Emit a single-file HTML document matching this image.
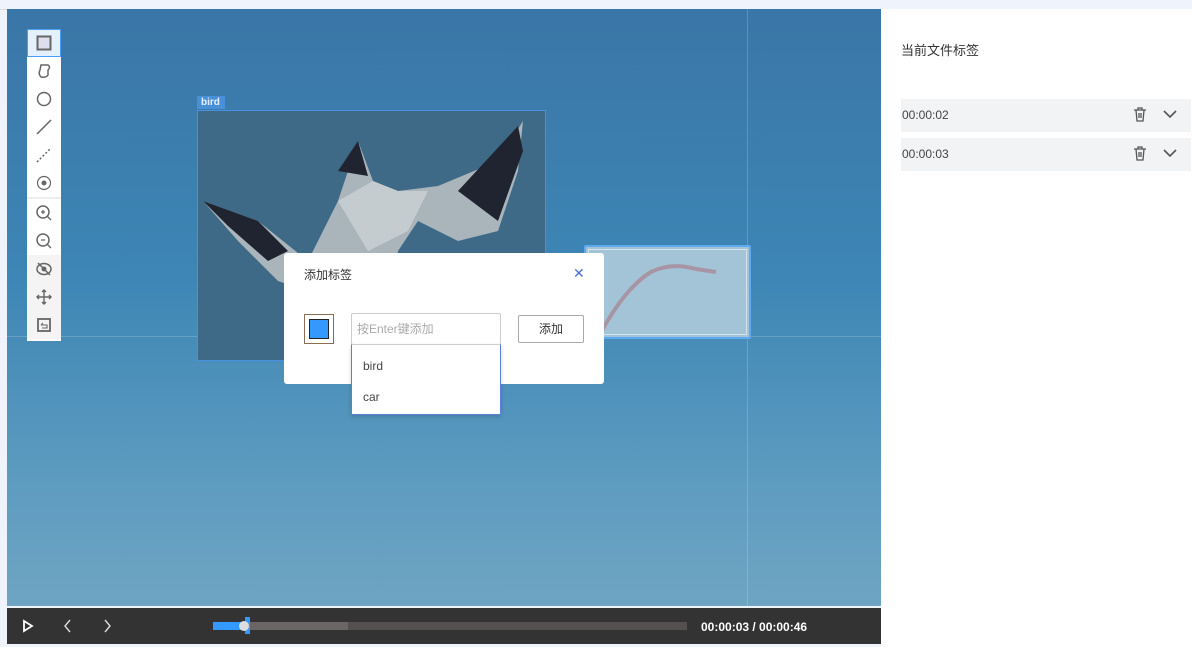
<!DOCTYPE html>
<html><head><meta charset="utf-8"><style>
*{margin:0;padding:0;box-sizing:border-box}
body{width:1192px;height:647px;background:#eef3fc;position:relative;overflow:hidden;font-family:"Liberation Sans","Noto Sans CJK SC",sans-serif}
.abs{position:absolute}
#video{left:7px;top:9px;width:874px;height:597px;background:linear-gradient(180deg,#3a76a7 0%,#3d86b5 45%,#5e9cc0 80%,#6fa4c3 100%)}
#tb{left:27px;top:29px;width:34px;height:312px;background:#fff}
#tb .b{height:28px;display:flex;align-items:center;justify-content:center}
#ctl{left:7px;top:608px;width:874px;height:36px;background:#333}
#right{left:881px;top:9px;width:311px;height:638px;background:#fff}
.row{position:absolute;left:20px;width:290px;height:33px;background:#f2f3f5;font-size:12px;color:#444;line-height:33px;padding-left:1px}
</style></head><body>
<div class="abs" style="left:0;top:9px;width:881px;height:1px;background:#d6dbe3"></div>
<div id="video" class="abs">
 <div class="abs" style="left:740px;top:0;width:1px;height:597px;background:rgba(255,255,255,.18)"></div>
 <div class="abs" style="left:0;top:327px;width:874px;height:1px;background:rgba(255,255,255,.18)"></div>
 <div class="abs" style="left:190px;top:101px;width:349px;height:251px;background:#3e6a87;border:1px solid #4a90e2;overflow:hidden">
  <svg width="349" height="251" style="position:absolute;left:0;top:0">
   <path d="M5 90 L60 110 L110 150 L140 90 L150 60 L160 30 L175 70 L200 80 L240 75 L300 50 L325 10 L320 60 L300 120 L260 130 L220 110 L200 140 L190 251 L120 251 L110 180 L80 170 L40 130 Z" fill="#aab5bb"/>
   <path d="M140 90 L175 70 L200 80 L230 80 L210 120 L170 140 Z" fill="#c4ccd0"/>
   <path d="M5 90 L60 110 L90 140 L70 150 L30 115 Z M260 80 L320 15 L325 40 L300 110 Z M140 60 L160 30 L170 65 Z" fill="#1f2430"/>
  </svg>
 </div>
 <div class="abs" style="left:190px;top:87px;width:28px;height:13px;background:#4a90d9;color:#e6f0fb;font-size:10px;font-weight:bold;line-height:13px;padding-left:4px">bird</div>
 <div class="abs" style="left:577px;top:236px;width:167px;height:94px;border:2px solid #5eaaf0;border-radius:2px;background:#a3c4d6">
  <div class="abs" style="left:2px;top:2px;right:2px;bottom:2px;border:1px solid #d6e3ec"></div>
  <svg width="163" height="90" class="abs" style="left:0;top:0"><path d="M15 85 Q40 40 65 25 Q85 15 110 22 L130 25" stroke="#a88a9a" stroke-width="4" fill="none" opacity=".8"/></svg>
 </div>
</div>
<div id="tb" class="abs">
 <div class="b" style="background:#e4f0fc;border:1px solid #4a9eff"><svg width="16" height="16"><rect x="1.5" y="1.5" width="13" height="13" fill="#dde" stroke="#666" stroke-width="2"/></svg></div>
 <div class="b"><svg width="16" height="16"><path d="M5 2 L12 2 Q15 4 12 7 L12 12 Q10 15 5 14 Q2 11 4 7 Z" fill="none" stroke="#666" stroke-width="1.5"/></svg></div>
 <div class="b"><svg width="16" height="16"><circle cx="8" cy="8" r="6.5" fill="none" stroke="#666" stroke-width="1.5"/></svg></div>
 <div class="b"><svg width="16" height="16"><path d="M1 15 L15 1" stroke="#666" stroke-width="1.5"/></svg></div>
 <div class="b"><svg width="16" height="16"><path d="M1 15 L15 1" stroke="#666" stroke-width="1.5" stroke-dasharray="2 2"/></svg></div>
 <div class="b"><svg width="16" height="16"><circle cx="8" cy="8" r="6.5" fill="none" stroke="#666" stroke-width="1.2"/><circle cx="8" cy="8" r="2.5" fill="#666"/></svg></div>
 <div style="height:2px;background:#eee"></div>
 <div class="b"><svg width="16" height="16"><circle cx="7" cy="7" r="6" fill="none" stroke="#666" stroke-width="1.5"/><path d="M11 11 L15 15 M5 7 H9 M7 5 V9" stroke="#666" stroke-width="1.3"/></svg></div>
 <div class="b"><svg width="16" height="16"><circle cx="7" cy="7" r="6" fill="none" stroke="#666" stroke-width="1.5"/><path d="M11 11 L15 15 M5 7 H9" stroke="#666" stroke-width="1.3"/></svg></div>
 <div class="b" style="background:#f4f4f4"><svg width="16" height="16"><ellipse cx="8" cy="8" rx="7" ry="5.5" fill="none" stroke="#666" stroke-width="1.5"/><circle cx="8" cy="8" r="2.5" fill="#666"/><path d="M2 2 L14 14" stroke="#666" stroke-width="1.5"/></svg></div>
 <div class="b" style="background:#f4f4f4"><svg width="16" height="16"><path d="M8 1 V15 M1 8 H15 M6 3 L8 1 L10 3 M6 13 L8 15 L10 13 M3 6 L1 8 L3 10 M13 6 L15 8 L13 10" fill="none" stroke="#666" stroke-width="1.4"/></svg></div>
 <div class="b" style="background:#f4f4f4"><svg width="16" height="16"><rect x="2" y="2" width="12" height="12" fill="none" stroke="#666" stroke-width="1.8"/><path d="M5 8 H11 V11 H6 M5 8 L7 6" fill="none" stroke="#666" stroke-width="1.1"/></svg></div>
</div>
<div class="abs" style="left:284px;top:253px;width:320px;height:131px;background:#fff;border-radius:3px">
 <div class="abs" style="left:20px;top:13px;font-size:12px;color:#333">添加标签</div>
 <div class="abs" style="left:289px;top:12px;font-size:14px;color:#4a6fd0">✕</div>
 <div class="abs" style="left:20px;top:61px;width:30px;height:30px;border:1px solid #8a6d55;padding:4px"><div style="width:20px;height:20px;background:#3399ff;border:1px solid #222"></div></div>
 <div class="abs" style="left:67px;top:60px;width:150px;height:32px;border:1px solid #ccc;border-radius:2px;font-size:12px;color:#aaa;line-height:30px;padding-left:5px">按Enter键添加</div>
 <div class="abs" style="left:234px;top:62px;width:66px;height:28px;border:1px solid #aaa;border-radius:2px;font-size:12px;color:#333;line-height:26px;text-align:center">添加</div>
</div>
<div class="abs" style="left:351px;top:344px;width:150px;height:71px;background:#fff;border:1px solid #5b7fd9;border-top-color:#ccc;box-shadow:0 2px 4px rgba(0,0,0,.15);font-size:12px;color:#444">
 <div style="position:absolute;left:11px;top:14px">bird</div>
 <div style="position:absolute;left:11px;top:45px">car</div>
</div>
<div id="ctl" class="abs">
 <svg class="abs" style="left:14px;top:11px" width="14" height="14"><path d="M3 2 L11 7 L3 12 Z" fill="none" stroke="#fff" stroke-width="1.8"/></svg>
 <svg class="abs" style="left:55px;top:10px" width="12" height="16"><path d="M8 2 L3 8 L8 14" fill="none" stroke="#ddd" stroke-width="1.4"/></svg>
 <svg class="abs" style="left:95px;top:10px" width="12" height="16"><path d="M3 2 L8 8 L3 14" fill="none" stroke="#ddd" stroke-width="1.4"/></svg>
 <div class="abs" style="left:206px;top:14px;width:474px;height:8px;background:#555050"></div>
 <div class="abs" style="left:206px;top:14px;width:135px;height:8px;background:#6a6666"></div>
 <div class="abs" style="left:206px;top:14px;width:30px;height:8px;background:#3399ff"></div>
 <div class="abs" style="left:238px;top:9px;width:5px;height:17px;background:#3399ff"></div>
 <div class="abs" style="left:232px;top:13px;width:10px;height:10px;border-radius:5px;background:#ddd"></div>
 <div class="abs" style="left:694px;top:12px;font-size:12px;font-weight:bold;color:#fff">00:00:03 / 00:00:46</div>
</div>
<div id="right" class="abs">
 <div class="abs" style="left:20px;top:31px;font-size:13px;color:#333">当前文件标签</div>
 <div class="row" style="top:90px">00:00:02</div>
 <div class="row" style="top:129px">00:00:03</div>
 <svg class="abs" style="left:251px;top:97px" width="16" height="18"><path d="M2 4 H14 M6 4 V2 H10 V4 M4 4 L5 15 H11 L12 4 M7 7 V12 M9 7 V12" fill="none" stroke="#555" stroke-width="1.3"/></svg>
 <svg class="abs" style="left:281px;top:99px" width="16" height="12"><path d="M2 3 L8 9 L14 3" fill="none" stroke="#555" stroke-width="1.6"/></svg>
 <svg class="abs" style="left:251px;top:136px" width="16" height="18"><path d="M2 4 H14 M6 4 V2 H10 V4 M4 4 L5 15 H11 L12 4 M7 7 V12 M9 7 V12" fill="none" stroke="#555" stroke-width="1.3"/></svg>
 <svg class="abs" style="left:281px;top:138px" width="16" height="12"><path d="M2 3 L8 9 L14 3" fill="none" stroke="#555" stroke-width="1.6"/></svg>
</div>
</body></html>
